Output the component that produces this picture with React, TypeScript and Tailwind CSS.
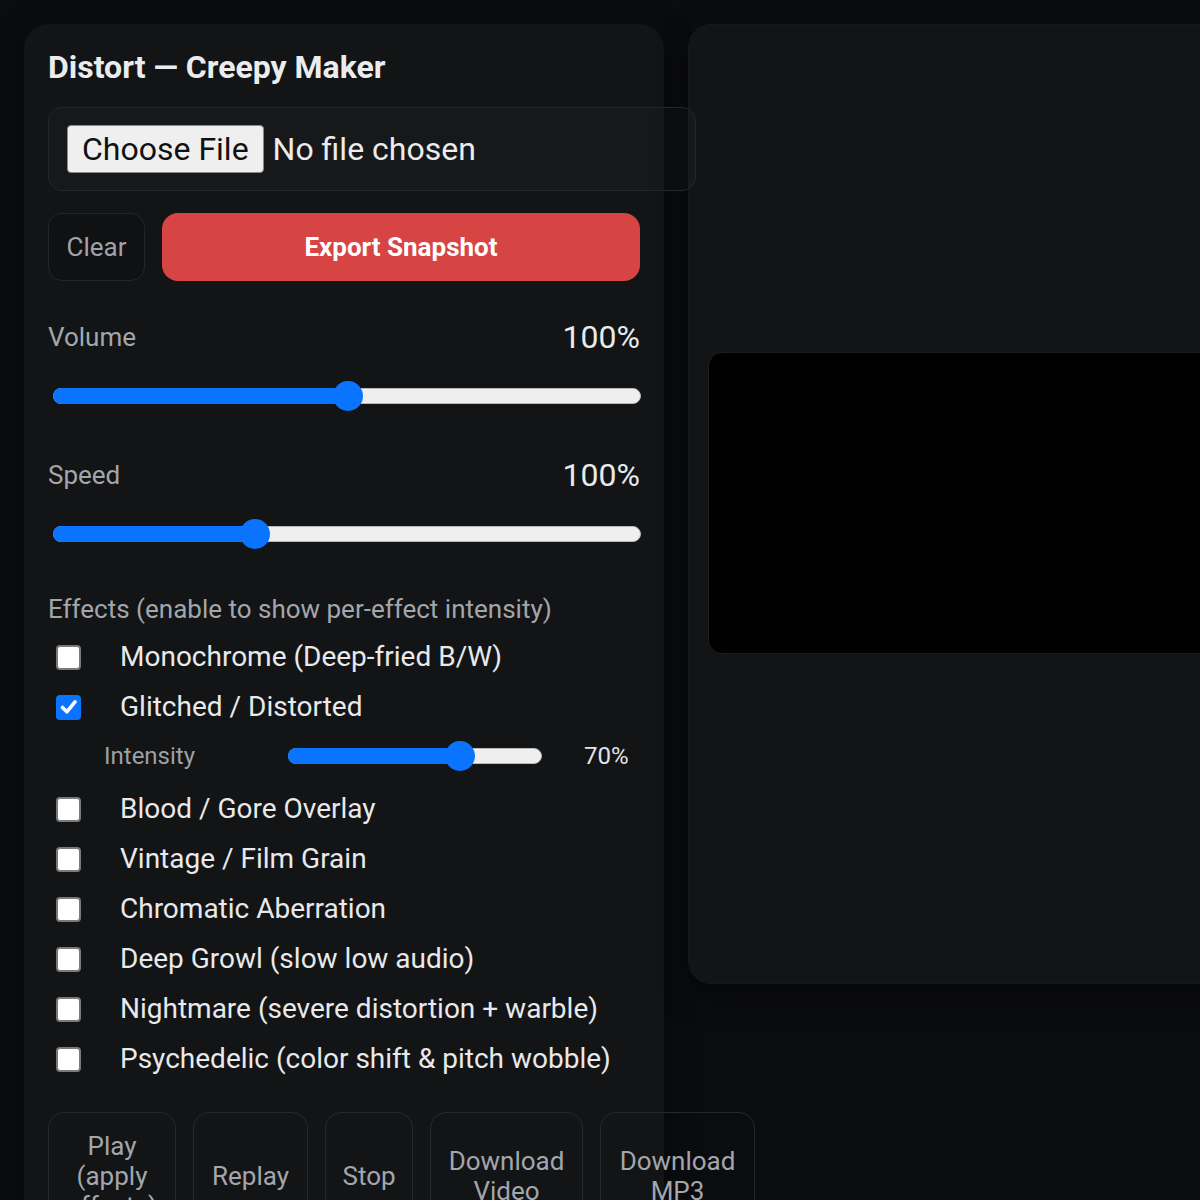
import React from "react";

function Range({ className, value }: { className: string; value: number }) {
  return (
    <div className={"relative h-[30px] flex-none " + className}>
      <div className="absolute left-0 right-0 top-[7px] h-[16px] rounded-full border border-[#b9b9b9] bg-[#efefef]" />
      <div
        className="absolute left-0 top-[7px] h-[16px] rounded-l-full bg-[#0b74ff]"
        style={{ width: `calc(15px + ${value} * (100% - 30px))` }}
      />
      <div
        className="absolute top-0 h-[30px] w-[30px] rounded-full bg-[#0b74ff]"
        style={{ left: `calc(${value} * (100% - 30px))` }}
      />
    </div>
  );
}

function Check({ checked }: { checked?: boolean }) {
  if (checked) {
    return (
      <div className="flex h-[25px] w-[25px] flex-none items-center justify-center rounded-[4px] bg-[#0b74ff]">
        <svg width="18" height="16" viewBox="0 0 18 16">
          <path d="M2.5 8.5 L6.8 12.8 L15 2.8" fill="none" stroke="white" strokeWidth="3.6" strokeLinecap="round" strokeLinejoin="round" />
        </svg>
      </div>
    );
  }
  return <div className="h-[25px] w-[25px] flex-none rounded-[4px] border-2 border-[#7a7a7a] bg-white" />;
}

function Effect({ label, checked }: { label: string; checked?: boolean }) {
  return (
    <div className="flex h-[50px] items-center pl-[8px]">
      <Check checked={checked} />
      <span className="ml-[39px] text-[28px] leading-[50px] text-[#e8e9eb] whitespace-nowrap">{label}</span>
    </div>
  );
}

function Btn({ className, children }: { className: string; children: React.ReactNode }) {
  return (
    <div
      className={
        "flex flex-none items-center justify-center rounded-[16px] border border-[#26282c] py-[18px] text-center text-[26px] leading-[30px] text-[#a3a6ab] " +
        className
      }
    >
      <span>{children}</span>
    </div>
  );
}

export default function App() {
  return (
    <div className="h-[1200px] w-[1200px] overflow-hidden bg-[#0b0c0e] font-['Roboto','Noto_Sans',sans-serif]">
      <div className="flex items-start gap-[24px] p-[24px]">
        {/* Left panel */}
        <div className="w-[640px] flex-none rounded-[24px] bg-[#131416] px-[24px] pt-[24px] pb-[40px] shadow-[0_10px_30px_rgba(0,0,0,0.5)]">
          <h1 className="text-[32px] font-bold leading-[38px] text-[#ebecee] whitespace-nowrap">Distort — Creepy Maker</h1>

          <div className="relative z-10 mt-[21px] flex h-[84px] w-[648px] items-center rounded-[14px] border border-[#24262a] bg-white/[0.02] px-[18px]">
            <div className="flex h-[48px] items-center rounded-[4px] border border-[#8a8a8a] bg-[#efefef] px-[14px] text-[32px] text-[#111] whitespace-nowrap">
              Choose File
            </div>
            <span className="ml-[9px] text-[32px] text-[#ececec] whitespace-nowrap">No file chosen</span>
          </div>

          <div className="mt-[22px] flex gap-[17px]">
            <div className="flex h-[68px] w-[97px] items-center justify-center rounded-[14px] border border-[#23252a] bg-[#101113] text-[26px] text-[#a0a3a8]">
              Clear
            </div>
            <div className="flex h-[68px] w-[478px] items-center justify-center rounded-[16px] bg-[#d74444] text-[26px] font-bold text-white">
              Export Snapshot
            </div>
          </div>

          <div className="mt-[38px] flex h-[36px] items-center justify-between">
            <span className="text-[26px] leading-[36px] text-[#a3a6ab]">Volume</span>
            <span className="text-[32px] leading-[36px] text-[#e9eaec]">100%</span>
          </div>
          <div className="mt-[26px] flex">
            <Range className="ml-[5px] w-[588px]" value={0.502} />
          </div>

          <div className="mt-[46px] flex h-[36px] items-center justify-between">
            <span className="text-[26px] leading-[36px] text-[#a3a6ab]">Speed</span>
            <span className="text-[32px] leading-[36px] text-[#e9eaec]">100%</span>
          </div>
          <div className="mt-[26px] flex">
            <Range className="ml-[5px] w-[588px]" value={0.335} />
          </div>

          <div className="mt-[44px] text-[26px] leading-[32px] text-[#a3a6ab] whitespace-nowrap">
            Effects (enable to show per-effect intensity)
          </div>

          <div className="mt-[7px] flex flex-col">
            <Effect label="Monochrome (Deep-fried B/W)" />
            <Effect label="Glitched / Distorted" checked />
            <div className="flex h-[52px] items-center pb-[4px] pl-[56px]">
              <span className="w-[184px] flex-none text-[24px] text-[#9da0a6]">Intensity</span>
              <Range className="w-[254px]" value={0.7} />
              <span className="ml-[42px] text-[24px] text-[#e3e4e6]">70%</span>
            </div>
            <Effect label="Blood / Gore Overlay" />
            <Effect label="Vintage / Film Grain" />
            <Effect label="Chromatic Aberration" />
            <Effect label="Deep Growl (slow low audio)" />
            <Effect label="Nightmare (severe distortion + warble)" />
            <Effect label="Psychedelic (color shift & pitch wobble)" />
          </div>

          <div className="relative z-10 mt-[28px] flex gap-[17px]">
            <Btn className="w-[128px]">
              Play
              <br />
              (apply
              <br />
              effects)
            </Btn>
            <Btn className="w-[115px]">Replay</Btn>
            <Btn className="w-[88px]">Stop</Btn>
            <Btn className="w-[153px]">
              Download
              <br />
              Video
            </Btn>
            <Btn className="w-[155px]">
              Download
              <br />
              MP3
            </Btn>
          </div>
        </div>

        {/* Right panel */}
        <div className="flex h-[960px] w-[600px] flex-none items-center rounded-[24px] border border-white/[0.02] bg-[#131416] px-[19px] shadow-[0_10px_30px_rgba(0,0,0,0.5)]">
          <div className="-mt-[2px] h-[302px] w-[560px] rounded-[14px] border border-[#1c1d20] bg-black" />
        </div>
      </div>
    </div>
  );
}
